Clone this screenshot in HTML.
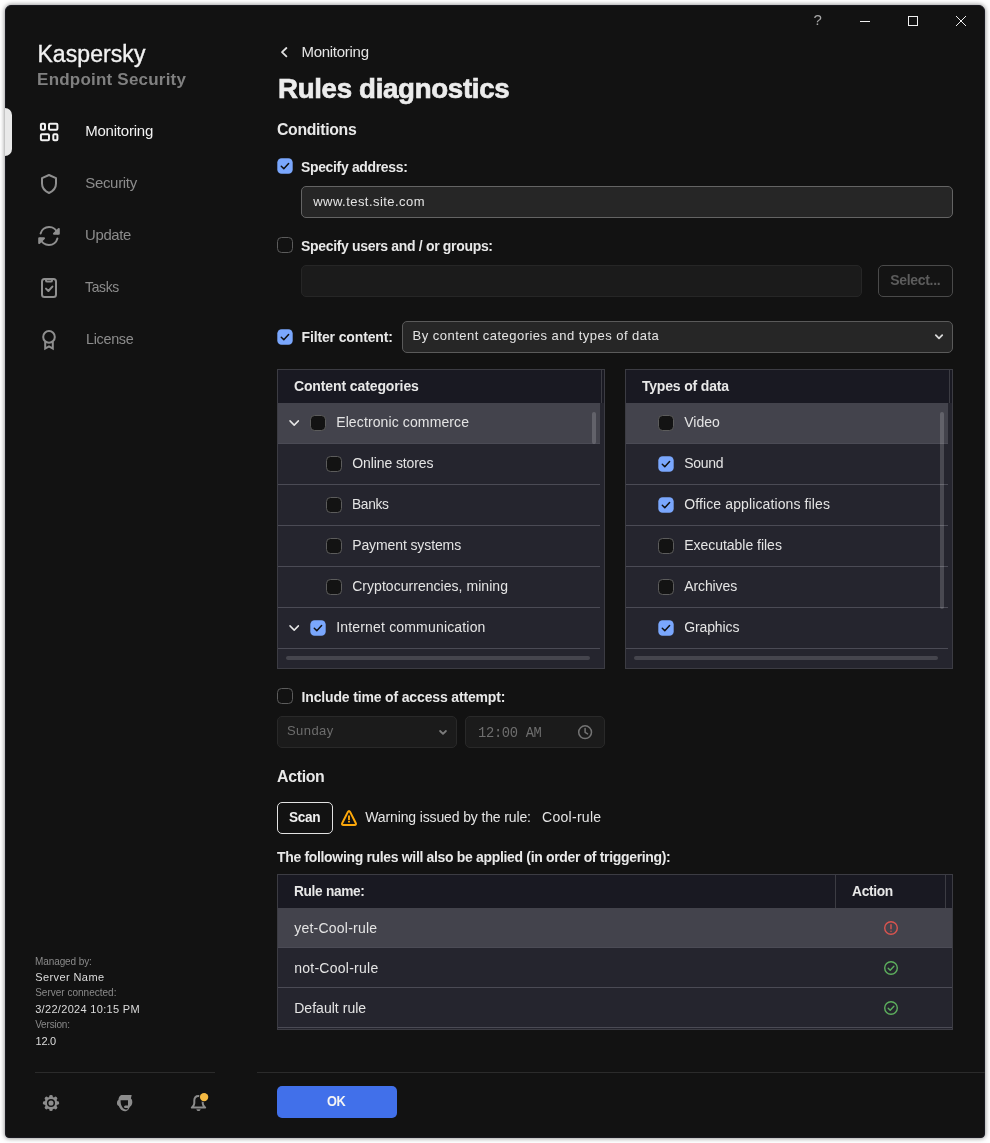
<!DOCTYPE html>
<html lang="en">
<head>
<meta charset="utf-8">
<title>Kaspersky Endpoint Security - Rules diagnostics</title>
<style>
html,body{margin:0;padding:0;background:#fff;}
body{width:990px;height:1143px;position:relative;overflow:hidden;font-family:"Liberation Sans",sans-serif;}
#win{position:absolute;left:5px;top:5px;width:980px;height:1133px;background:#121212;border-radius:6px 6px 4px 4px;box-shadow:0 0 5px rgba(0,0,0,.53);border:1px solid #191920;box-sizing:border-box;}
#root{position:absolute;left:0;top:0;width:990px;height:1143px;will-change:transform;}
.t{position:absolute;white-space:pre;line-height:20px;font-size:14px;color:#e8e8e8;transform-origin:0 50%;}
.ttl{-webkit-text-stroke:0.7px #ececec;}
.kas{-webkit-text-stroke:0.35px #f2f2f2;}
.a{position:absolute;display:block;overflow:visible;}
.ln{position:absolute;height:1px;}
</style>
</head>
<body>
<div id="win"></div>
<div id="root">

<!-- window controls -->
<span class="t " style="left:813.60px;top:10.10px;font-size:15px;color:#a8a8a8;">?</span>
<svg class="a" style="left:855px;top:10px" width="120" height="22" viewBox="0 0 120 22" fill="none" stroke="#f0f0f0" stroke-width="1"><path d="M5 11.5 H15"/><rect x="53.5" y="6.5" width="9" height="9"/><path d="M101 6 L111 16 M111 6 L101 16"/></svg>
<!-- sidebar -->
<span class="t kas" style="left:37.40px;top:44.30px;font-size:23px;color:#f2f2f2;letter-spacing:0.078px;">Kaspersky</span>
<span class="t " style="left:37.10px;top:69.50px;font-size:17px;font-weight:700;color:#808080;letter-spacing:0.210px;">Endpoint Security</span>
<div class="" style="position:absolute;left:5px;top:108px;width:7px;height:48px;background:#e9e9e9;border-radius:0 7px 7px 0;"></div>
<svg class="a" style="left:37px;top:120px" width="24" height="24" viewBox="0 0 24 24" fill="none" stroke="#f2f2f2" stroke-width="2" stroke-linejoin="round"><rect x="3.9" y="3.7" width="4.1" height="6.1" rx="1"/><rect x="12" y="3.7" width="8.4" height="6.1" rx="1"/><rect x="3.9" y="14.3" width="8.1" height="5.9" rx="1"/><rect x="16.3" y="14.3" width="4.1" height="5.9" rx="1"/></svg>
<svg class="a" style="left:37px;top:172px" width="24" height="24" viewBox="0 0 24 24" fill="none" stroke="#8f8f8f" stroke-width="2" stroke-linejoin="round"><path d="M12 3 L19 6.2 V11.5 C19 15.8 16 19.2 12 21 C8 19.2 5 15.8 5 11.5 V6.2 Z"/></svg>
<svg class="a" style="left:37px;top:224px" width="24" height="24" viewBox="0 0 24 24" fill="none" stroke="#8f8f8f" stroke-width="2" stroke-linecap="round" stroke-linejoin="round"><path d="M3.6 9.6 A8.8 8.8 0 0 1 20.6 9.4"/><path d="M21.8 5 V9.8 H17 Z" fill="#8f8f8f"/><path d="M20.4 14.4 A8.8 8.8 0 0 1 3.4 14.6"/><path d="M2.2 19 V14.2 H7 Z" fill="#8f8f8f"/></svg>
<svg class="a" style="left:37px;top:276px" width="24" height="24" viewBox="0 0 24 24" fill="none" stroke="#8f8f8f" stroke-width="2" stroke-linecap="round" stroke-linejoin="round"><rect x="5" y="3" width="14" height="18" rx="2.5"/><path d="M9 3.4 V4.4 Q9 5.6 10.2 5.6 H13.8 Q15 5.6 15 4.4 V3.4"/><path d="M9 12.6 L11.4 15 L15.4 10.6"/></svg>
<svg class="a" style="left:37px;top:328px" width="24" height="24" viewBox="0 0 24 24" fill="none" stroke="#8f8f8f" stroke-width="2" stroke-linejoin="miter"><circle cx="12" cy="8.9" r="5.8"/><path d="M8.2 13.8 V20.6 L12 18.4 L15.8 20.6 V13.8"/></svg>
<span class="t " style="left:85.20px;top:120.80px;font-size:15px;color:#f2f2f2;letter-spacing:-0.218px;">Monitoring</span>
<span class="t " style="left:85.20px;top:172.70px;font-size:15px;color:#8c8c8c;letter-spacing:-0.313px;">Security</span>
<span class="t " style="left:85.30px;top:224.60px;font-size:15px;color:#8c8c8c;letter-spacing:-0.32px;transform:scaleX(0.9920);">Update</span>
<span class="t " style="left:85.30px;top:276.50px;font-size:15px;color:#8c8c8c;letter-spacing:-0.32px;transform:scaleX(0.9247);">Tasks</span>
<span class="t " style="left:85.70px;top:328.70px;font-size:15px;color:#8c8c8c;letter-spacing:-0.32px;transform:scaleX(0.9585);">License</span>
<span class="t " style="left:35.10px;top:951.70px;font-size:10px;color:#8a8a8a;letter-spacing:-0.111px;">Managed by:</span>
<span class="t " style="left:35.20px;top:966.90px;font-size:11px;color:#dcdcdc;letter-spacing:0.409px;">Server Name</span>
<span class="t " style="left:35.20px;top:983.20px;font-size:10px;color:#8a8a8a;letter-spacing:0.007px;">Server connected:</span>
<span class="t " style="left:35.20px;top:998.70px;font-size:11px;color:#dcdcdc;letter-spacing:0.314px;">3/22/2024 10:15 PM</span>
<span class="t " style="left:35.20px;top:1014.80px;font-size:10px;color:#8a8a8a;letter-spacing:-0.189px;">Version:</span>
<span class="t " style="left:35.60px;top:1030.60px;font-size:11px;color:#dcdcdc;letter-spacing:-0.312px;">12.0</span>
<div class="ln" style="left:35px;top:1072px;width:180px;background:#2b2b2b"></div>
<svg class="a" style="left:41px;top:1093px" width="20" height="20" viewBox="0 0 20 20"><g fill="#8c8c8c"><circle cx="10" cy="10" r="6.3"/><rect x="8.3" y="1.9" width="3.4" height="4" rx="1.4" transform="rotate(0 10 10)"/><rect x="8.3" y="1.9" width="3.4" height="4" rx="1.4" transform="rotate(45 10 10)"/><rect x="8.3" y="1.9" width="3.4" height="4" rx="1.4" transform="rotate(90 10 10)"/><rect x="8.3" y="1.9" width="3.4" height="4" rx="1.4" transform="rotate(135 10 10)"/><rect x="8.3" y="1.9" width="3.4" height="4" rx="1.4" transform="rotate(180 10 10)"/><rect x="8.3" y="1.9" width="3.4" height="4" rx="1.4" transform="rotate(225 10 10)"/><rect x="8.3" y="1.9" width="3.4" height="4" rx="1.4" transform="rotate(270 10 10)"/><rect x="8.3" y="1.9" width="3.4" height="4" rx="1.4" transform="rotate(315 10 10)"/></g><circle cx="10" cy="10" r="3.3" fill="none" stroke="#121212" stroke-width="1.5"/></svg>
<svg class="a" style="left:114px;top:1093px" width="20" height="20" viewBox="0 0 20 20"><path d="M7.4 2 H17.7 L16.9 5.6 C18 6.4 18.4 7.6 18.3 9.6 C18.2 11.6 17.4 12.8 16 13.8 L15 15.6 C14.6 16.6 13.6 17.6 12.4 18.1 C11 18.6 9.6 18.4 8.4 17.6 C6.6 16.4 5.4 14.8 4.8 13 C3.4 12.4 2.8 11 3 9.4 C3.1 8.2 3.6 7.4 4.4 7 C4.4 4.8 5.4 2.8 7.4 2 Z" fill="#8c8c8c"/><path d="M6.6 7.2 H14 V12.5 H11.2 C9.7 12.5 9.6 15 11.2 15.1 L13.9 15.1 L13.3 16.5 C11.5 16.8 9.5 16 8.2 14 C7 12.2 6.5 9.8 6.6 7.2 Z" fill="#121212"/></svg>
<svg class="a" style="left:188px;top:1091px" width="24" height="22" viewBox="0 0 24 22" fill="none"><path d="M10.5 5 C7.8 5 6.3 7 6.3 9.6 V12.2 C6.3 14 5 15.4 3.8 16.6 H17.2 C16 15.4 14.7 14 14.7 12.2 V9.6 C14.7 7 13.2 5 10.5 5 Z" stroke="#8c8c8c" stroke-width="2" stroke-linejoin="round"/><path d="M8.3 18.2 H12.7 C12.3 19.6 11.5 20 10.5 20 C9.5 20 8.7 19.6 8.3 18.2 Z" fill="#8c8c8c"/><circle cx="16.1" cy="6.1" r="5" fill="#121212"/><circle cx="16.1" cy="6.1" r="4.2" fill="#f4b942"/></svg>
<!-- main -->
<svg class="a" style="left:278px;top:45px" width="12" height="14" viewBox="0 0 12 14" fill="none" stroke="#e0e0e0" stroke-width="1.8" stroke-linecap="round" stroke-linejoin="round"><path d="M8.4 3 L4 7.2 L8.4 11.4"/></svg>
<span class="t " style="left:301.50px;top:42.10px;font-size:15px;color:#e4e4e4;letter-spacing:-0.285px;">Monitoring</span>
<span class="t ttl" style="left:278.30px;top:78.50px;font-size:28px;font-weight:700;color:#ececec;letter-spacing:-0.32px;transform:scaleX(0.9876);">Rules diagnostics</span>
<span class="t " style="left:277.40px;top:119.50px;font-size:16px;font-weight:700;color:#e8e8e8;letter-spacing:-0.32px;transform:scaleX(0.9878);">Conditions</span>
<svg class="a" style="left:277px;top:158px" width="16" height="16" viewBox="0 0 16 16"><rect x="0.3" y="0.3" width="15.4" height="15.4" rx="4.3" fill="#7aa7fd"/><path d="M4.3 8.3 L6.8 10.7 L11.6 5.5" fill="none" stroke="#101010" stroke-width="1.5" stroke-linecap="round" stroke-linejoin="round"/></svg>
<span class="t " style="left:300.70px;top:157.30px;font-weight:700;color:#e8e8e8;letter-spacing:-0.32px;transform:scaleX(0.9957);">Specify address:</span>
<div class="" style="position:absolute;left:301px;top:186px;width:650px;height:30px;border:1px solid #646464;border-radius:5px;background:#262626;"></div>
<span class="t " style="left:313.26px;top:192.40px;font-size:13px;color:#e4e4e4;letter-spacing:0.455px;">www.test.site.com</span>
<svg class="a" style="left:277px;top:237px" width="16" height="16" viewBox="0 0 16 16"><rect x="0.5" y="0.5" width="15" height="15" rx="4" fill="#121212" stroke="#5c5c5c" stroke-width="1"/></svg>
<span class="t " style="left:300.70px;top:236.10px;font-weight:700;color:#e8e8e8;letter-spacing:-0.32px;transform:scaleX(0.9989);">Specify users and / or groups:</span>
<div class="" style="position:absolute;left:301px;top:265px;width:559px;height:30px;border:1px solid #262626;border-radius:5px;background:#1b1b1b;"></div>
<div class="" style="position:absolute;left:878px;top:265px;width:73px;height:30px;border:1px solid #4a4a4a;border-radius:5px;background:#141414;"></div>
<span class="t " style="left:890.20px;top:269.90px;font-weight:700;color:#5c5c5c;letter-spacing:-0.305px;">Select...</span>
<svg class="a" style="left:277px;top:328.5px" width="16" height="16" viewBox="0 0 16 16"><rect x="0.3" y="0.3" width="15.4" height="15.4" rx="4.3" fill="#7aa7fd"/><path d="M4.3 8.3 L6.8 10.7 L11.6 5.5" fill="none" stroke="#101010" stroke-width="1.5" stroke-linecap="round" stroke-linejoin="round"/></svg>
<span class="t " style="left:301.50px;top:327.00px;font-weight:700;color:#e8e8e8;letter-spacing:-0.137px;">Filter content:</span>
<div class="" style="position:absolute;left:402px;top:321px;width:549px;height:30px;border:1px solid #5a5a5a;border-radius:5px;background:#262626;"></div>
<span class="t " style="left:412.60px;top:326.40px;font-size:13px;color:#e4e4e4;letter-spacing:0.469px;">By content categories and types of data</span>
<svg class="a" style="left:933px;top:331px" width="12" height="12" viewBox="0 0 12 12" fill="none" stroke="#d8d8d8" stroke-width="1.8" stroke-linecap="round" stroke-linejoin="round"><path d="M2.8 4.2 L6 7.4 L9.2 4.2"/></svg>
<!-- content categories -->
<div class="" style="position:absolute;left:277px;top:369px;width:326px;height:298px;border:1px solid #3c3c43;background:#25252e;"></div>
<div class="" style="position:absolute;left:278px;top:370px;width:326px;height:33px;background:#191922;"></div>
<div class="" style="position:absolute;left:601px;top:370px;width:1px;height:33px;background:#3c3c43;"></div>
<span class="t " style="left:293.90px;top:376.20px;font-weight:700;color:#e8e8e8;letter-spacing:-0.107px;">Content categories</span>
<div class="" style="position:absolute;left:278px;top:403px;width:322px;height:40px;background:#43434c;border-bottom:1px solid #4b4b55;"></div>
<svg class="a" style="left:288px;top:418px" width="12" height="10" viewBox="0 0 12 10" fill="none" stroke="#e6e6e6" stroke-width="1.5" stroke-linecap="round" stroke-linejoin="round"><path d="M2 2.9 L6.2 7.1 L10.4 2.9"/></svg>
<svg class="a" style="left:310px;top:415px" width="16" height="16" viewBox="0 0 16 16"><rect x="0.5" y="0.5" width="15" height="15" rx="4" fill="#131313" stroke="#5c5c5c" stroke-width="1"/></svg>
<span class="t " style="left:336.20px;top:412.00px;color:#e4e4e4;letter-spacing:0.117px;">Electronic commerce</span>
<div class="" style="position:absolute;left:278px;top:444px;width:322px;height:40px;background:#25252e;border-bottom:1px solid #4b4b55;"></div>
<svg class="a" style="left:326px;top:456px" width="16" height="16" viewBox="0 0 16 16"><rect x="0.5" y="0.5" width="15" height="15" rx="4" fill="#131313" stroke="#5c5c5c" stroke-width="1"/></svg>
<span class="t " style="left:352.20px;top:453.00px;color:#e4e4e4;letter-spacing:-0.092px;">Online stores</span>
<div class="" style="position:absolute;left:278px;top:485px;width:322px;height:40px;background:#25252e;border-bottom:1px solid #4b4b55;"></div>
<svg class="a" style="left:326px;top:497px" width="16" height="16" viewBox="0 0 16 16"><rect x="0.5" y="0.5" width="15" height="15" rx="4" fill="#131313" stroke="#5c5c5c" stroke-width="1"/></svg>
<span class="t " style="left:352.20px;top:494.00px;color:#e4e4e4;letter-spacing:-0.32px;transform:scaleX(0.9825);">Banks</span>
<div class="" style="position:absolute;left:278px;top:526px;width:322px;height:40px;background:#25252e;border-bottom:1px solid #4b4b55;"></div>
<svg class="a" style="left:326px;top:538px" width="16" height="16" viewBox="0 0 16 16"><rect x="0.5" y="0.5" width="15" height="15" rx="4" fill="#131313" stroke="#5c5c5c" stroke-width="1"/></svg>
<span class="t " style="left:352.20px;top:535.00px;color:#e4e4e4;letter-spacing:-0.107px;">Payment systems</span>
<div class="" style="position:absolute;left:278px;top:567px;width:322px;height:40px;background:#25252e;border-bottom:1px solid #4b4b55;"></div>
<svg class="a" style="left:326px;top:579px" width="16" height="16" viewBox="0 0 16 16"><rect x="0.5" y="0.5" width="15" height="15" rx="4" fill="#131313" stroke="#5c5c5c" stroke-width="1"/></svg>
<span class="t " style="left:352.20px;top:576.00px;color:#e4e4e4;letter-spacing:0.039px;">Cryptocurrencies, mining</span>
<div class="" style="position:absolute;left:278px;top:608px;width:322px;height:40px;background:#25252e;border-bottom:1px solid #4b4b55;"></div>
<svg class="a" style="left:288px;top:623px" width="12" height="10" viewBox="0 0 12 10" fill="none" stroke="#e6e6e6" stroke-width="1.5" stroke-linecap="round" stroke-linejoin="round"><path d="M2 2.9 L6.2 7.1 L10.4 2.9"/></svg>
<svg class="a" style="left:310px;top:620px" width="16" height="16" viewBox="0 0 16 16"><rect x="0.3" y="0.3" width="15.4" height="15.4" rx="4.3" fill="#7aa7fd"/><path d="M4.3 8.3 L6.8 10.7 L11.6 5.5" fill="none" stroke="#101010" stroke-width="1.5" stroke-linecap="round" stroke-linejoin="round"/></svg>
<span class="t " style="left:336.20px;top:617.00px;color:#e4e4e4;letter-spacing:0.176px;">Internet communication</span>
<div class="" style="position:absolute;left:592px;top:412px;width:4px;height:32px;background:rgba(255,255,255,.17);border-radius:2px;"></div>
<div class="" style="position:absolute;left:286px;top:656px;width:304px;height:4px;background:rgba(255,255,255,.15);border-radius:2px;"></div>
<!-- types of data -->
<div class="" style="position:absolute;left:625px;top:369px;width:326px;height:298px;border:1px solid #3c3c43;background:#25252e;"></div>
<div class="" style="position:absolute;left:626px;top:370px;width:326px;height:33px;background:#191922;"></div>
<div class="" style="position:absolute;left:949px;top:370px;width:1px;height:33px;background:#3c3c43;"></div>
<span class="t " style="left:641.90px;top:376.20px;font-weight:700;color:#e8e8e8;letter-spacing:-0.168px;">Types of data</span>
<div class="" style="position:absolute;left:626px;top:403px;width:322px;height:40px;background:#43434c;border-bottom:1px solid #4b4b55;"></div>
<svg class="a" style="left:658px;top:415px" width="16" height="16" viewBox="0 0 16 16"><rect x="0.5" y="0.5" width="15" height="15" rx="4" fill="#131313" stroke="#5c5c5c" stroke-width="1"/></svg>
<span class="t " style="left:684.20px;top:412.00px;color:#e4e4e4;letter-spacing:0.034px;">Video</span>
<div class="" style="position:absolute;left:626px;top:444px;width:322px;height:40px;background:#25252e;border-bottom:1px solid #4b4b55;"></div>
<svg class="a" style="left:658px;top:456px" width="16" height="16" viewBox="0 0 16 16"><rect x="0.3" y="0.3" width="15.4" height="15.4" rx="4.3" fill="#7aa7fd"/><path d="M4.3 8.3 L6.8 10.7 L11.6 5.5" fill="none" stroke="#101010" stroke-width="1.5" stroke-linecap="round" stroke-linejoin="round"/></svg>
<span class="t " style="left:684.20px;top:453.00px;color:#e4e4e4;letter-spacing:-0.275px;">Sound</span>
<div class="" style="position:absolute;left:626px;top:485px;width:322px;height:40px;background:#25252e;border-bottom:1px solid #4b4b55;"></div>
<svg class="a" style="left:658px;top:497px" width="16" height="16" viewBox="0 0 16 16"><rect x="0.3" y="0.3" width="15.4" height="15.4" rx="4.3" fill="#7aa7fd"/><path d="M4.3 8.3 L6.8 10.7 L11.6 5.5" fill="none" stroke="#101010" stroke-width="1.5" stroke-linecap="round" stroke-linejoin="round"/></svg>
<span class="t " style="left:684.20px;top:494.00px;color:#e4e4e4;letter-spacing:0.119px;">Office applications files</span>
<div class="" style="position:absolute;left:626px;top:526px;width:322px;height:40px;background:#25252e;border-bottom:1px solid #4b4b55;"></div>
<svg class="a" style="left:658px;top:538px" width="16" height="16" viewBox="0 0 16 16"><rect x="0.5" y="0.5" width="15" height="15" rx="4" fill="#131313" stroke="#5c5c5c" stroke-width="1"/></svg>
<span class="t " style="left:684.20px;top:535.00px;color:#e4e4e4;letter-spacing:-0.024px;">Executable files</span>
<div class="" style="position:absolute;left:626px;top:567px;width:322px;height:40px;background:#25252e;border-bottom:1px solid #4b4b55;"></div>
<svg class="a" style="left:658px;top:579px" width="16" height="16" viewBox="0 0 16 16"><rect x="0.5" y="0.5" width="15" height="15" rx="4" fill="#131313" stroke="#5c5c5c" stroke-width="1"/></svg>
<span class="t " style="left:684.20px;top:576.00px;color:#e4e4e4;letter-spacing:-0.098px;">Archives</span>
<div class="" style="position:absolute;left:626px;top:608px;width:322px;height:40px;background:#25252e;border-bottom:1px solid #4b4b55;"></div>
<svg class="a" style="left:658px;top:620px" width="16" height="16" viewBox="0 0 16 16"><rect x="0.3" y="0.3" width="15.4" height="15.4" rx="4.3" fill="#7aa7fd"/><path d="M4.3 8.3 L6.8 10.7 L11.6 5.5" fill="none" stroke="#101010" stroke-width="1.5" stroke-linecap="round" stroke-linejoin="round"/></svg>
<span class="t " style="left:684.20px;top:617.00px;color:#e4e4e4;letter-spacing:-0.114px;">Graphics</span>
<div class="" style="position:absolute;left:940px;top:412px;width:4px;height:197px;background:rgba(255,255,255,.17);border-radius:2px;"></div>
<div class="" style="position:absolute;left:634px;top:656px;width:304px;height:4px;background:rgba(255,255,255,.15);border-radius:2px;"></div>
<!-- time -->
<svg class="a" style="left:277px;top:688px" width="16" height="16" viewBox="0 0 16 16"><rect x="0.5" y="0.5" width="15" height="15" rx="4" fill="#121212" stroke="#5c5c5c" stroke-width="1"/></svg>
<span class="t " style="left:301.50px;top:687.00px;font-weight:700;color:#e8e8e8;letter-spacing:-0.153px;">Include time of access attempt:</span>
<div class="" style="position:absolute;left:277px;top:716px;width:178px;height:30px;border:1px solid #292929;border-radius:5px;background:#1b1b1b;"></div>
<span class="t " style="left:287.00px;top:721.40px;font-size:13px;color:#6c6c6c;letter-spacing:0.427px;">Sunday</span>
<svg class="a" style="left:437px;top:727px" width="12" height="12" viewBox="0 0 12 12" fill="none" stroke="#7c7c7c" stroke-width="1.8" stroke-linecap="round" stroke-linejoin="round"><path d="M3.1 4 L6 6.9 L8.9 4"/></svg>
<div class="" style="position:absolute;left:465px;top:716px;width:138px;height:30px;border:1px solid #292929;border-radius:5px;background:#1b1b1b;"></div>
<span class="t " style="left:477.60px;top:722.90px;font-family:'Liberation Mono',monospace;color:#6e6e6e;letter-spacing:-0.32px;transform:scaleX(0.9823);">12:00 AM</span>
<svg class="a" style="left:576px;top:723px" width="18" height="18" viewBox="0 0 18 18" fill="none" stroke="#747474" stroke-width="1.5" stroke-linecap="round" stroke-linejoin="round"><circle cx="9.1" cy="9.2" r="6.4"/><path d="M9.1 5.4 V9.4 L11.6 10.9"/></svg>
<!-- action -->
<span class="t " style="left:277.10px;top:766.50px;font-size:16px;font-weight:700;color:#e8e8e8;letter-spacing:-0.32px;transform:scaleX(0.9927);">Action</span>
<div class="" style="position:absolute;left:277px;top:802px;width:54px;height:30px;border:1px solid #e2e2e2;border-radius:5px;background:#121212;"></div>
<span class="t " style="left:289.10px;top:807.00px;font-weight:700;color:#f0f0f0;letter-spacing:-0.32px;transform:scaleX(0.9730);">Scan</span>
<svg class="a" style="left:339px;top:807px" width="20" height="20" viewBox="0 0 20 20" fill="none" stroke="#fda80b" stroke-width="2" stroke-linejoin="round"><path d="M8.9 4.9 Q10 2.9 11.1 4.9 L16.7 16 Q17.7 18 15.5 18 H4.5 Q2.3 18 3.3 16 Z"/><path d="M10 8.4 V13.2" stroke-width="1.9"/><path d="M10 14 V15.4" stroke-width="1.9"/></svg>
<span class="t " style="left:365.30px;top:807.00px;color:#e4e4e4;letter-spacing:-0.132px;">Warning issued by the rule:</span>
<span class="t " style="left:542.00px;top:807.00px;color:#e4e4e4;letter-spacing:0.286px;">Cool-rule</span>
<span class="t " style="left:277.10px;top:846.80px;font-weight:700;color:#e8e8e8;letter-spacing:-0.32px;transform:scaleX(0.9980);">The following rules will also be applied (in order of triggering):</span>
<!-- rules table -->
<div class="" style="position:absolute;left:277px;top:874px;width:674px;height:154px;border:1px solid #3c3c43;background:#25252e;"></div>
<div class="" style="position:absolute;left:278px;top:875px;width:674px;height:33px;background:#191922;"></div>
<div class="" style="position:absolute;left:835px;top:875px;width:1px;height:33px;background:#3c3c43;"></div>
<div class="" style="position:absolute;left:945px;top:875px;width:1px;height:33px;background:#3c3c43;"></div>
<span class="t " style="left:294.40px;top:881.00px;font-weight:700;color:#e8e8e8;letter-spacing:-0.32px;transform:scaleX(0.9772);">Rule name:</span>
<span class="t " style="left:852.30px;top:881.00px;font-weight:700;color:#e8e8e8;letter-spacing:-0.32px;transform:scaleX(0.9842);">Action</span>
<div class="" style="position:absolute;left:278px;top:908px;width:674px;height:39px;background:#43434c;border-bottom:1px solid #4b4b55;"></div>
<span class="t " style="left:294.20px;top:917.60px;color:#e4e4e4;letter-spacing:0.231px;">yet-Cool-rule</span>
<svg class="a" style="left:883px;top:920px" width="16" height="16" viewBox="0 0 16 16" fill="none" stroke="#d9544f" stroke-width="1.4" stroke-linecap="round"><circle cx="8" cy="8" r="6.3"/><path d="M8 4.7 V8.8"/><path d="M8 11.1 V11.2"/></svg>
<div class="" style="position:absolute;left:278px;top:948px;width:674px;height:39px;background:#25252e;border-bottom:1px solid #4b4b55;"></div>
<span class="t " style="left:294.20px;top:957.60px;color:#e4e4e4;letter-spacing:0.255px;">not-Cool-rule</span>
<svg class="a" style="left:883px;top:960px" width="16" height="16" viewBox="0 0 16 16" fill="none" stroke="#5dae5d" stroke-width="1.4" stroke-linecap="round" stroke-linejoin="round"><circle cx="8" cy="8" r="6.3"/><path d="M5.2 8.3 L7.2 10.2 L10.9 6.2"/></svg>
<div class="" style="position:absolute;left:278px;top:988px;width:674px;height:39px;background:#25252e;border-bottom:1px solid #4b4b55;"></div>
<span class="t " style="left:294.20px;top:997.60px;color:#e4e4e4;letter-spacing:0.031px;">Default rule</span>
<svg class="a" style="left:883px;top:1000px" width="16" height="16" viewBox="0 0 16 16" fill="none" stroke="#5dae5d" stroke-width="1.4" stroke-linecap="round" stroke-linejoin="round"><circle cx="8" cy="8" r="6.3"/><path d="M5.2 8.3 L7.2 10.2 L10.9 6.2"/></svg>
<!-- footer -->
<div class="ln" style="left:257px;top:1072px;width:728px;background:#2b2b2b"></div>
<div class="" style="position:absolute;left:277px;top:1086px;width:120px;height:32px;background:#4170ea;border-radius:5px;"></div>
<span class="t " style="left:327.30px;top:1091.00px;font-weight:700;color:#f4f4f4;letter-spacing:-0.32px;transform:scaleX(0.9091);">OK</span>
</div>
</body>
</html>
